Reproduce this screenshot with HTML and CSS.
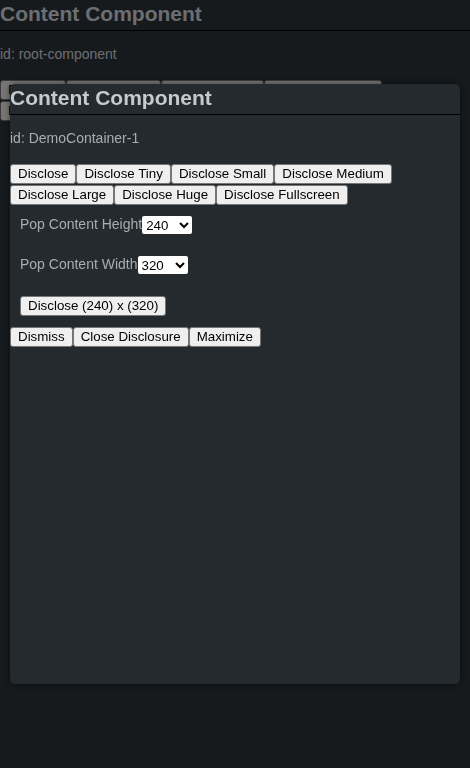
FILE: index.html
```html
<!DOCTYPE html>
<html>
<head>
<meta charset="utf-8">
<title>Content Component</title>
<link rel="stylesheet" href="styles.css">
</head>
<body>
<div class="component root">
  <h2 class="title">Content Component</h2>
  <p class="cid">id: root-component</p>
  <div class="btns">
    <button>Disclose</button><button>Disclose Tiny</button><button>Disclose Small</button><button>Disclose Medium</button><button>Disclose Large</button><button>Disclose Huge</button><button>Disclose Fullscreen</button>
  </div>
  <div class="field"><span>Pop Content Height</span><select><option>240</option></select></div>
  <div class="field"><span>Pop Content Width</span><select><option>320</option></select></div>
  <div class="field"><button>Disclose (240) x (320)</button></div>
</div>
<div class="overlay"></div>
<div class="component popup">
  <h2 class="title">Content Component</h2>
  <p class="cid">id: DemoContainer-1</p>
  <div class="btns">
    <button>Disclose</button><button>Disclose Tiny</button><button>Disclose Small</button><button>Disclose Medium</button><button>Disclose Large</button><button>Disclose Huge</button><button>Disclose Fullscreen</button>
  </div>
  <div class="field"><span>Pop Content Height</span><select><option>240</option><option>120</option><option>480</option></select></div>
  <div class="field"><span>Pop Content Width</span><select><option>320</option><option>160</option><option>640</option></select></div>
  <div class="field"><button>Disclose (240) x (320)</button></div>
  <div class="btns actions">
    <button>Dismiss</button><button>Close Disclosure</button><button>Maximize</button>
  </div>
</div>
</body>
</html>
```
FILE: styles.css
```css
html, body {
  margin: 0;
  padding: 0;
  height: 100%;
}
body {
  background: #2c343a;
  font-family: "Liberation Sans", Arial, sans-serif;
  color: #d9dde0;
  overflow: hidden;
}
.component {
  box-sizing: border-box;
}
.title {
  margin: 0;
  font-size: 21px;
  font-weight: bold;
  line-height: 28px;
  padding-bottom: 2px;
  border-bottom: 1px solid #000;
}
.cid {
  margin: 15px 0 18px;
  font-size: 14px;
  line-height: 16px;
}
.btns {
  display: flex;
  flex-wrap: wrap;
  row-gap: 1px;
  column-gap: 0;
}
button {
  font-family: "Liberation Sans", Arial, sans-serif;
  font-size: 13.333px;
  line-height: 16px;
  padding: 1px 7px;
  border: 1px solid #767676;
  border-radius: 3px;
  background: #efefef;
  color: #000;
}
.field {
  display: flex;
  align-items: center;
  padding: 10px;
  height: 20px;
  font-size: 14px;
}
.field span {
  position: relative;
  top: -1px;
}
.field button {
  margin-top: 1px;
}
select {
  font-family: "Liberation Sans", Arial, sans-serif;
  font-size: 13.333px;
  height: 18px;
  width: 50px;
  color: #000;
  background: #fff;
  border: none;
  border-radius: 2px;
}
.actions {
  margin-top: 2px;
}
.overlay {
  position: fixed;
  inset: 0;
  background: rgba(0, 0, 0, 0.5);
}
.popup {
  position: absolute;
  left: 10px;
  top: 84px;
  width: 450px;
  height: 600px;
  background: #242a2e;
  border-radius: 5px;
  box-shadow: 0 0 6px rgba(0, 0, 0, 0.5);
  color: #c6cacc;
}
.popup .cid {
  color: #a9adb0;
}
.popup .field {
  color: #a9adb0;
}
```
